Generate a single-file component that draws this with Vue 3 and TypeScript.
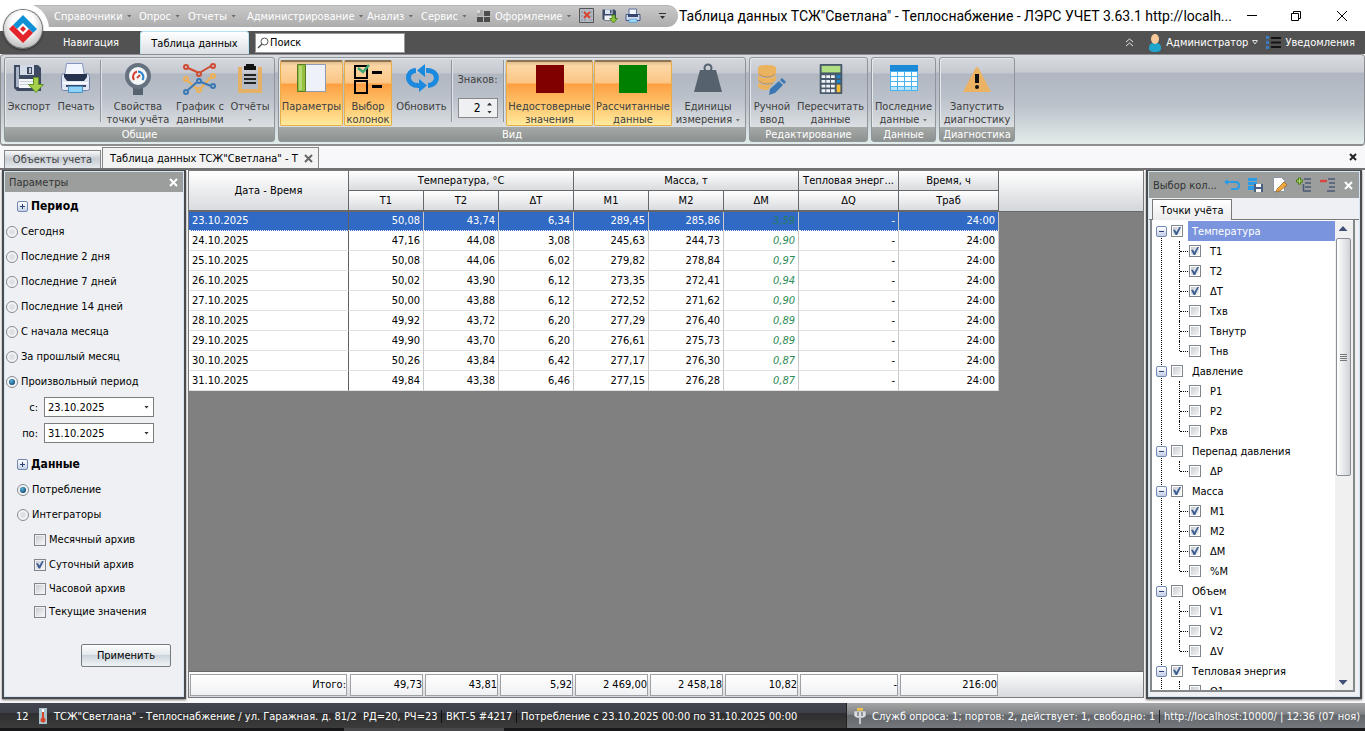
<script setup lang="ts">
import { ref, reactive } from 'vue'

interface TreeNode { label: string; checked: boolean; children: { label: string; checked: boolean }[] }

const menus: string[] = ['Справочники', 'Опрос', 'Отчеты', 'Администрирование', 'Анализ', 'Сервис']
const periods: string[] = ['Сегодня', 'Последние 2 дня', 'Последние 7 дней', 'Последние 14 дней', 'С начала месяца', 'За прошлый месяц', 'Произвольный период']
const period = ref('Произвольный период')
const dateFrom = ref('23.10.2025')
const dateTo = ref('31.10.2025')
const source = ref('Потребление')
const digits = ref('2')
const search = ref('Поиск')
const archives = reactive([
  { label: 'Месячный архив', checked: false },
  { label: 'Суточный архив', checked: true },
  { label: 'Часовой архив', checked: false },
  { label: 'Текущие значения', checked: false },
])

const rows: string[][] = [
  ['23.10.2025', '50,08', '43,74', '6,34', '289,45', '285,86', '3,59', '-', '24:00'],
  ['24.10.2025', '47,16', '44,08', '3,08', '245,63', '244,73', '0,90', '-', '24:00'],
  ['25.10.2025', '50,08', '44,06', '6,02', '279,82', '278,84', '0,97', '-', '24:00'],
  ['26.10.2025', '50,02', '43,90', '6,12', '273,35', '272,41', '0,94', '-', '24:00'],
  ['27.10.2025', '50,00', '43,88', '6,12', '272,52', '271,62', '0,90', '-', '24:00'],
  ['28.10.2025', '49,92', '43,72', '6,20', '277,29', '276,40', '0,89', '-', '24:00'],
  ['29.10.2025', '49,90', '43,70', '6,20', '276,61', '275,73', '0,89', '-', '24:00'],
  ['30.10.2025', '50,26', '43,84', '6,42', '277,17', '276,30', '0,87', '-', '24:00'],
  ['31.10.2025', '49,84', '43,38', '6,46', '277,15', '276,28', '0,87', '-', '24:00'],
]
const totals: string[] = ['Итого:', '49,73', '43,81', '5,92', '2 469,00', '2 458,18', '10,82', '-', '216:00']
const subHeads: string[] = ['T1', 'T2', 'ΔT', 'M1', 'M2', 'ΔM', 'ΔQ', 'Траб']

const node = (label: string, checked: boolean, on: string[], off: string[]): TreeNode => ({
  label,
  checked,
  children: [...on.map((l) => ({ label: l, checked: true })), ...off.map((l) => ({ label: l, checked: false }))],
})
const tree = reactive<TreeNode[]>([
  node('Температура', true, ['T1', 'T2', 'ΔT'], ['Tхв', 'Tвнутр', 'Tнв']),
  node('Давление', false, [], ['P1', 'P2', 'Pхв']),
  node('Перепад давления', false, [], ['ΔP']),
  node('Масса', true, ['M1', 'M2', 'ΔM'], ['%M']),
  node('Объем', false, [], ['V1', 'V2', 'ΔV']),
  node('Тепловая энергия', true, [], ['Q1']),
])
</script>

<template>
  <div class="app">
    <header class="titlebar">
      <div class="quick">
        <nav class="menus">
          <button v-for="m in menus" :key="m" type="button">{{ m }}<i class="tri"></i></button>
          <button type="button">
            <svg width="14" height="14" viewBox="0 0 14 14"><path fill="#a8a8a8" d="M0 1h6v6H0z" /><path fill="#4c4c4c" d="M7 2h6v5H7zM0 8h6v5H0zM7 8h6v5H7z" /><path fill="#d8d8d8" d="M0 1h3v3H0z" /></svg>
            Оформление<i class="tri"></i>
          </button>
        </nav>
        <button type="button" aria-label="Исключить" class="qi">
          <svg width="16" height="16" viewBox="0 0 16 16"><path fill="#b4bac2" stroke="#555" d="M.5.5h14v14H.5z" /><path stroke="#7d8fa8" stroke-dasharray="2 2" d="M3 3v10M6 3v10M12 3v10" /><path stroke="#d8452c" stroke-width="2" d="m5 4 6 6m0-6-6 6" /></svg>
        </button>
        <button type="button" aria-label="Экспорт" class="qi">
          <svg width="16" height="16" viewBox="0 0 32 32"><path fill="#3c4c68" d="M1 3h24l3 3v19H4l-3-3z" /><path fill="#d9e2ef" d="M6 3h15v9H6z" /><path fill="#3c4c68" d="M16 4h3v7h-3z" /><path fill="#eef2f8" d="M5 15h18v9H5z" /><path fill="#8ec63a" stroke="#3f7a12" stroke-width="1.5" d="M20 14h6v7h5l-8 9-8-9h5z" /></svg>
        </button>
        <button type="button" aria-label="Печать" class="qi">
          <svg width="16" height="16" viewBox="0 0 32 32"><path fill="#f2f5fb" stroke="#5b6f9d" stroke-width="2" d="M8 2h15v12H8z" /><path fill="#d5dcec" stroke="#42568a" stroke-width="2" d="M2 13h28v12H2z" /><path fill="#35456e" d="M6 12h20v6H6z" /><path fill="#9bd4f5" stroke="#3a88c0" d="M8 22h16v7H8z" /></svg>
        </button>
        <button type="button" aria-label="Настроить панель" class="more"><i class="bar"></i><i class="tri dark"></i></button>
      </div>
      <h1>Таблица данных ТСЖ"Светлана" - Теплоснабжение - ЛЭРС УЧЕТ 3.63.1 http://localh...</h1>
      <div class="wbtns">
        <button type="button" aria-label="Свернуть"><svg width="12" height="12"><path stroke="#000" d="M1 5.500h10" /></svg></button>
        <button type="button" aria-label="Восстановить"><svg width="12" height="12"><path fill="none" stroke="#000" d="M1.500 3.500h7v7h-7zM3.500 3V1.500h7v7H9" /></svg></button>
        <button type="button" aria-label="Закрыть"><svg width="12" height="12"><path stroke="#000" d="m1 1 10 10M11 1 1 11" /></svg></button>
      </div>
      <button type="button" class="orb" aria-label="Меню приложения">
        <svg width="30" height="30" viewBox="0 0 30 30"><path fill="#0f8fd6" d="M15 1l14 14-4 4-10-10-6 6-4-4z" /><path fill="#e3242b" d="M1 15l4-4 10 10 6-6 4 4-10 10z" /><path fill="#e3242b" d="M15 12l3 3-3 3-3-3z" /></svg>
      </button>
    </header>

    <div class="tabrow">
      <button type="button" class="rtab">Навигация</button>
      <button type="button" class="rtab on">Таблица данных</button>
      <label class="search">
        <svg width="12" height="12" viewBox="0 0 12 12"><circle cx="7.500" cy="4.500" r="3.500" fill="none" stroke="#555" /><path stroke="#555" stroke-width="1.500" d="M5 7 1 11" /></svg>
        <input v-model="search" type="text" aria-label="Поиск" />
      </label>
      <div class="user">
        <button type="button" aria-label="Свернуть ленту"><svg width="9" height="9" viewBox="0 0 9 9"><path fill="none" stroke="#e8e8e8" d="m1 4 3.500-3L8 4M1 8l3.500-3L8 8" /></svg></button>
        <button type="button" class="who">
          <svg width="14" height="18" viewBox="0 0 14 18"><path fill="#1fa5cc" d="M1 14c0-4 2-5 6-5s6 1 6 5c0 3-2 4-6 4s-6-1-6-4z" /><ellipse cx="7" cy="5" rx="4" ry="5" fill="#f8c99b" /></svg>
          Администратор<svg width="6" height="5" viewBox="0 0 6 5"><path fill="none" stroke="#ddd" d="M.5.500h5L3 4z" /></svg>
        </button>
        <button type="button" class="notes">
          <svg width="15" height="13" viewBox="0 0 15 13"><path stroke="#141414" stroke-width="2" d="M5 2h10M5 6.500h10M5 11h10" /><path fill="#3a7ac0" d="M0 0h3v3H0zM0 5h3v3H0zM0 10h3v3H0z" /></svg>
          Уведомления
        </button>
      </div>
    </div>

    <section class="ribbon">
      <div class="group">
        <div class="tools">
          <button type="button" class="w48">
            <svg width="32" height="32" viewBox="0 0 32 32"><path fill="#3d4a61" d="M1 2h24l3 3v23H4l-3-3z" /><path fill="#aab6c8" d="M3 4h3v20H3z" /><path fill="#d3dbe7" d="M7 2h14v10H7z" /><path fill="#3d4a61" d="M14 4h5v7h-5z" /><path fill="#c4ccd8" d="M16 5h2v5h-2z" /><path fill="#f4f6fa" d="M6 16h17v9H6z" /><path fill="#c7d0dd" d="M7 18h14v1H7zM7 21h14v1H7z" /><path fill="#a6d04b" stroke="#5d9221" d="M20.500 14.500h5v7h5l-7.500 8-7.500-8h5z" /></svg>
            <span>Экспорт</span>
          </button>
          <button type="button" class="w46">
            <svg width="32" height="32" viewBox="0 0 32 32"><path fill="#f3f6fc" stroke="#8497c4" d="M6.500.500h16l2 13h-20z" /><path fill="#dfe5f1" stroke="#7385ad" d="M1.500 13.500q0-3 3-3V14h22v-3.500q3 0 3 3v12q0 2-2 2h-24q-2 0-2-2z" /><path fill="#26324e" d="M4 11h23v3l-3 4H7l-3-4z" /><path fill="#f8faff" d="M3 19h25v2H3z" /><path fill="#394768" d="M6 22h20v2H6z" /><path fill="#8fd3f8" stroke="#4b93c4" d="M8.500 23.500h14v6h-14z" /></svg>
            <span>Печать</span>
          </button>
          <i class="sep"></i>
          <button type="button" class="w72">
            <svg width="32" height="32" viewBox="0 0 32 32"><path fill="#566270" d="M11 22h10v10H11z" /><circle cx="16" cy="13" r="11" fill="#f4f6f8" stroke="#66727f" stroke-width="4" /><path fill="none" stroke="#d83a30" stroke-width="2" d="M12 17a5.500 5.500 0 0 1 3-8.500" /><path fill="none" stroke="#2d86cc" stroke-width="2" d="M16 8.500a5.500 5.500 0 0 1 4.500 8.500" /><path stroke="#c5503a" stroke-width="2" d="m15 15 3-3" /></svg>
            <span>Свойства<br />точки учёта</span>
          </button>
          <button type="button" class="w52">
            <svg width="34" height="32" viewBox="0 0 34 32"><g fill="none" stroke-width="2"><g stroke="#efb052"><path d="m5 18 9 8m4-1 10-11" /><circle cx="3" cy="16" r="2" /><circle cx="16" cy="27" r="2" /><circle cx="30" cy="13" r="2" /></g><g stroke="#3a78b5"><path d="m5 27 9-8m4 0 10 4" /><circle cx="3" cy="29" r="2" /><circle cx="16" cy="18" r="2" /><circle cx="30" cy="23" r="2" /></g><g stroke="#cf4b32"><path d="m5 5 9 4m4 0 10-6" /><circle cx="3" cy="4" r="2" /><circle cx="16" cy="11" r="2" /><circle cx="30" cy="3" r="2" /></g></g></svg>
            <span>График с<br />данными</span>
          </button>
          <button type="button" class="w48">
            <svg width="26" height="32" viewBox="0 0 26 32"><path fill="#e5b067" d="M1 4h4v22h16V4h4v26H1z" /><path fill="#111" d="M7 3h2V1h8v2h2v4H7z" /><path stroke="#222" stroke-width="2" d="M7 12h12M7 16h12M7 20h12" /></svg>
            <span>Отчёты<br /><i class="tri grey"></i></span>
          </button>
        </div>
        <h2>Общие</h2>
      </div>

      <div class="group">
        <div class="tools view">
          <button type="button" class="w63 on">
            <svg width="32" height="32" viewBox="0 0 32 32"><path fill="#eef1f8" stroke="#8d99b5" d="M2.500 1.500h27v27h-27z" /><path fill="#94bf3f" stroke="#5b7a28" d="M1.500 1.500h8v27h-8z" /><path fill="#b6d973" d="M3 3h3v24H3z" /></svg>
            <span>Параметры</span>
          </button>
          <button type="button" class="w48 on">
            <svg width="30" height="32" viewBox="0 0 30 32"><path fill="none" stroke="#000" stroke-width="2" d="M2 3h12v12H2zM2 18h12v12H2z" /><path stroke="#000" stroke-width="3" d="M19 9.500h10M19 23.500h10" /><path fill="none" stroke="#3fa877" stroke-width="2.500" d="m5 5 5 4 6-7" /></svg>
            <span>Выбор<br />колонок</span>
          </button>
          <button type="button" class="w57">
            <svg width="34" height="32" viewBox="0 0 34 32"><g fill="none" stroke="#1b8ade" stroke-width="5"><path d="M14 22.500C1 23 0 8 11 7.500" /><path d="M21 7.500c13-1 14 14 2 15" /></g><path fill="#1b8ade" d="m20 1v13l-8-6.500zM14 16v13l8-6.500z" /></svg>
            <span>Обновить</span>
          </button>
          <i class="sep"></i>
          <label class="digits">Знаков:
            <span class="spin"><input v-model="digits" type="text" aria-label="Знаков" /><span class="ud"><i class="tri up"></i><i class="tri dark"></i></span></span>
          </label>
          <i class="sep"></i>
          <button type="button" class="w87 on first"><i class="swatch red"></i><span>Недостоверные<br />значения</span></button>
          <button type="button" class="w78 on"><i class="swatch green"></i><span>Рассчитанные<br />данные</span></button>
          <button type="button" class="w70">
            <svg width="30" height="32" viewBox="0 0 30 32"><circle cx="15" cy="5" r="3.500" fill="none" stroke="#54616e" stroke-width="2" /><path fill="#56636f" d="M7 7h16l6 22H1z" /></svg>
            <span>Единицы<br />измерения <i class="tri grey"></i></span>
          </button>
        </div>
        <h2>Вид</h2>
      </div>

      <div class="group">
        <div class="tools">
          <button type="button" class="w44">
            <svg width="32" height="32" viewBox="0 0 32 32"><path fill="#ecb35f" d="M2 5q0-3 9-3t9 3v5q0 3-9 3T2 10zM2 12q2 3 9 3t9-3v4q0 4-9 4T2 16zM2 19q2 3 9 3t5-1l-4 6Q2 27 2 23z" /><path stroke="#c98b3a" fill="none" d="M3 11q3 3 8 3t8-3M3 18q3 3 8 3t6-1" /><path fill="#3b78b3" d="m14 26 9-8 4 4-8 8-6 2zM24 17l2-2 4 4-2 2z" /></svg>
            <span>Ручной<br />ввод</span>
          </button>
          <button type="button" class="w73">
            <svg width="26" height="34" viewBox="0 0 26 34"><rect x="1" y="1" width="24" height="32" rx="1" fill="#48596b" /><path fill="#b1df84" d="M3 3h20v7H3z" /><path fill="#f0f3f6" d="M3 13h4v3H3zM8 13h4v3H8zM13 13h4v3h-4zM3 18h4v3H3zM8 18h4v3H8zM13 18h4v3h-4zM3 23h4v3H3zM8 23h4v3H8zM13 23h4v3h-4zM3 28h4v3H3zM8 28h4v3H8zM13 28h4v3h-4z" /><path fill="#1b86d0" d="M19 13h4v3h-4zM19 18h4v3h-4z" /><path fill="#f5bd35" d="M19 23h4v8h-4z" /></svg>
            <span>Пересчитать<br />данные</span>
          </button>
        </div>
        <h2>Редактирование</h2>
      </div>
      <div class="group">
        <div class="tools">
          <button type="button" class="w63">
            <svg width="30" height="32" viewBox="0 0 30 32"><path fill="#4cb3ee" d="M1 2h28v26H1z" /><path fill="#1a8ad6" d="M1 2h28v6H1z" /><path fill="#fff" d="M2 9h6v4H2zM9 9h6v4H9zM16 9h6v4h-6zM23 9h5v4h-5zM2 14h6v4H2zM9 14h6v4H9zM16 14h6v4h-6zM23 14h5v4h-5zM2 19h6v4H2zM9 19h6v4H9zM16 19h6v4h-6zM23 19h5v4h-5z" /><path fill="#b8e4fb" d="M2 24h6v3H2zM9 24h6v3H9zM16 24h6v3h-6zM23 24h5v3h-5z" /></svg>
            <span>Последние<br />данные <i class="tri grey"></i></span>
          </button>
        </div>
        <h2>Данные</h2>
      </div>
      <div class="group">
        <div class="tools">
          <button type="button" class="w74">
            <svg width="30" height="32" viewBox="0 0 30 32"><path fill="#ecb263" d="M15 4q1 0 2 2l12 23H1L13 6q1-2 2-2z" /><path fill="#111" d="M13 11h4v9h-4z" /><circle cx="15" cy="24" r="2" fill="#111" /></svg>
            <span>Запустить<br />диагностику</span>
          </button>
        </div>
        <h2>Диагностика</h2>
      </div>
    </section>

    <div class="doctabs">
      <button type="button" class="dtab">Объекты учета</button>
      <div class="dtab on"><span>Таблица данных ТСЖ"Светлана" - Т</span>
        <button type="button" aria-label="Закрыть вкладку"><svg width="9" height="9"><path stroke="#666" stroke-width="2" d="m1 1 7 7M8 1 1 8" /></svg></button>
      </div>
      <button type="button" class="closeall" aria-label="Закрыть"><svg width="8" height="8"><path stroke="#222" stroke-width="2" d="m1 1 6 6M7 1 1 7" /></svg></button>
    </div>

    <main>
      <aside class="pane params">
        <div class="phead"><span>Параметры</span>
          <button type="button" aria-label="Закрыть параметры"><svg width="9" height="9"><path stroke="#fff" stroke-width="2" d="m1 1 7 7M8 1 1 8" /></svg></button>
        </div>
        <form class="pbody" @submit.prevent>
          <h3><button type="button" class="exp" aria-label="Развернуть период"><i></i><i class="v"></i></button>Период</h3>
          <label v-for="p in periods" :key="p" class="opt"><input v-model="period" type="radio" name="period" :value="p" />{{ p }}</label>
          <div class="date"><label for="from">с:</label><span class="combo"><input id="from" v-model="dateFrom" type="text" /><button type="button" aria-label="Выбрать дату начала"><i class="tri dark"></i></button></span></div>
          <div class="date last"><label for="to">по:</label><span class="combo"><input id="to" v-model="dateTo" type="text" /><button type="button" aria-label="Выбрать дату окончания"><i class="tri dark"></i></button></span></div>
          <h3><button type="button" class="exp" aria-label="Развернуть данные"><i></i><i class="v"></i></button>Данные</h3>
          <label class="opt src"><input v-model="source" type="radio" name="source" value="Потребление" />Потребление</label>
          <label class="opt src"><input v-model="source" type="radio" name="source" value="Интеграторы" />Интеграторы</label>
          <label v-for="a in archives" :key="a.label" class="opt arch"><input v-model="a.checked" type="checkbox" />{{ a.label }}</label>
          <button type="submit" class="apply">Применить</button>
        </form>
      </aside>

      <section class="grid">
        <div class="ghead">
          <table>
            <colgroup><col class="c0" /><col v-for="n in 6" :key="n" class="c1" /><col class="c2" /><col class="c2" /></colgroup>
            <thead>
              <tr><th rowspan="2">Дата - Время</th><th colspan="3">Температура, °С</th><th colspan="3">Масса, т</th><th>Тепловая энерг...</th><th>Время, ч</th></tr>
              <tr><th v-for="h in subHeads" :key="h">{{ h }}</th></tr>
            </thead>
            <tbody>
              <tr v-for="(r, i) in rows" :key="r[0]" :class="{ sel: i === 0 }"><td v-for="(c, j) in r" :key="j">{{ c }}</td></tr>
            </tbody>
          </table>
        </div>
        <div class="gfoot">
          <table>
            <colgroup><col class="c0" /><col v-for="n in 6" :key="n" class="c1" /><col class="c2" /><col class="c2" /></colgroup>
            <tbody><tr><td v-for="(t, i) in totals" :key="i"><div>{{ t }}</div></td></tr></tbody>
          </table>
        </div>
      </section>

      <aside class="pane cols">
        <div class="phead">
          <span>Выбор кол...</span>
          <div class="acts">
            <button type="button" aria-label="Отменить"><svg width="16" height="16" viewBox="0 0 16 16"><path fill="none" stroke="#2b9be6" stroke-width="2" d="M2 5h10q3 0 3 3.500T12 12H7" /><path fill="#2b9be6" d="M0 5l4-3v6z" /></svg></button>
            <button type="button" aria-label="Сохранить"><svg width="16" height="16" viewBox="0 0 16 16"><path fill="#2a9de8" d="M0 1h9v3H0zM0 5h9v3H0zM0 9h6v4H0z" /><path fill="#4a5e80" d="M6 7h9v8H6z" /><path fill="#fff" d="M8 7h5v3H8zM8 12h5v3H8z" /></svg></button>
            <button type="button" aria-label="Изменить"><svg width="16" height="16" viewBox="0 0 16 16"><path fill="#fff" stroke="#8d97a8" d="M1.500.500h8l3 3v11h-11z" /><path fill="#f0a63c" stroke="#9a6420" stroke-width=".7" d="m5 12 7-7 3 3-7 6-4 1z" /></svg></button>
            <button type="button" aria-label="Развернуть все"><svg width="16" height="16" viewBox="0 0 16 16"><path stroke="#4b5a76" stroke-width="1.500" d="M8 2h7M9 6h6M9 10h6M7 14h8M7.500 7v7" /><path stroke="#4f7d1d" stroke-width="3" d="M0 4h7M3.500.500v7" /><path stroke="#b4e070" d="M1 4h5M3.500 1.500v5" /></svg></button>
            <button type="button" aria-label="Свернуть все"><svg width="16" height="16" viewBox="0 0 16 16"><path stroke="#4b5a76" stroke-width="1.500" d="M8 2h7M9 6h6M9 10h6M7 14h8" /><path stroke="#d8453a" stroke-width="2.500" d="M0 4h7" /></svg></button>
            <button type="button" aria-label="Закрыть панель"><svg width="9" height="9"><path stroke="#fff" stroke-width="2" d="m1 1 7 7M8 1 1 8" /></svg></button>
          </div>
        </div>
        <div class="ctabs"><button type="button">Точки учёта</button></div>
        <div class="treebox">
          <ul class="tree">
            <li v-for="(g, i) in tree" :key="g.label" class="branch">
              <div class="row parent" :class="{ cur: i === 0 }">
                <button type="button" class="exp" aria-label="Свернуть ветвь"><i></i></button>
                <label><input v-model="g.checked" type="checkbox" /><span>{{ g.label }}</span></label>
              </div>
              <ul>
                <li v-for="c in g.children" :key="c.label" class="row leaf"><label><input v-model="c.checked" type="checkbox" /><span>{{ c.label }}</span></label></li>
              </ul>
            </li>
          </ul>
          <div class="scroll">
            <i class="tri up big"></i>
            <div class="thumb"><i></i><i></i><i></i><i></i></div>
            <i class="tri big"></i>
          </div>
        </div>
      </aside>
    </main>

    <footer class="status">
      <div class="sleft">
        <span class="num">12</span>
        <svg width="8" height="16" viewBox="0 0 8 16"><path fill="#a9c4cf" d="M0 0h8v16H0z" /><path fill="#fff" d="M3 1h2v9H3z" /><path fill="#d8452c" d="M3 4h2v6H3z" /><circle cx="4" cy="12" r="2.500" fill="#d8452c" /></svg>
        <span class="s1">ТСЖ"Светлана" - Теплоснабжение / ул. Гаражная. д. 81/2&nbsp; РД=20, РЧ=23</span>
        <span class="s2">ВКТ-5 #4217</span>
        <span class="s3">Потребление с 23.10.2025 00:00 по 31.10.2025 00:00</span>
      </div>
      <div class="sright">
        <svg width="14" height="16" viewBox="0 0 14 16"><path fill="#f2c14a" d="M4 0h6v3H4z" /><path fill="#d9dde2" stroke="#777" stroke-width=".5" d="M1 3h12v5l-3 2H4L1 8z" /><path fill="#8e959c" d="M4 4h2v4H4zM8 4h2v4H8z" /><path fill="#c5cad0" d="M6 10h2v6H6z" /></svg>
        <span class="s4">Служб опроса: 1; портов: 2, действует: 1, свободно: 1</span>
        <span class="s5">http://localhost:10000/ | 12:36 (07 ноя)</span>
      </div>
    </footer>
    <div class="edge"><i></i></div>
  </div>
</template>

<style>
html, body { margin: 0; background: #f8f8fa; }
</style>

<style scoped>
* { box-sizing: border-box; }
.app { height: 100vh; display: flex; flex-direction: column; overflow: hidden; font: 11px/13px "DejaVu Sans Condensed", "Noto Sans", sans-serif; color: #000; background: #f8f8fa; }
button { font: inherit; color: inherit; background: none; border: 0; padding: 0; margin: 0; }
input { font: inherit; color: inherit; margin: 0; }
svg { display: block; flex: none; }
h1, h2, h3, ul { margin: 0; padding: 0; list-style: none; font-size: 11px; font-weight: normal; }
.tri { display: inline-block; flex: none; width: 5px; height: 3px; background: #fff; clip-path: polygon(0 0, 100% 0, 50% 100%); }
.tri.dark { background: #333; }
.tri.grey { background: #777; vertical-align: middle; }
.tri.up { background: #333; clip-path: polygon(50% 0, 100% 100%, 0 100%); }
.tri.big { width: 9px; height: 5px; background: #3f4f75; }

.titlebar { position: relative; flex: none; height: 31px; display: flex; align-items: center; background: #fff; padding-left: 34px; }
.titlebar::before { content: ""; position: absolute; left: -3px; top: 3px; width: 52px; height: 28px; border-radius: 26px 26px 0 0; background: #fff; }
.quick { height: 22px; display: flex; align-items: center; flex: none; width: 644px; padding-left: 20px; background: linear-gradient(#c8c8c8, #adadad); border-radius: 0 11px 11px 0; border-top: 1px solid #b5b5b5; }
.menus { display: grid; grid-template-columns: 85px 49px 59px 120px 54px 56px 102px; color: #fff; }
.menus button { display: flex; align-items: center; gap: 4px; white-space: nowrap; }
.menus .tri { background: #6c6c6c; }
.qi { width: 23px; }
.more { display: grid; justify-items: center; gap: 2px; margin-left: 11px; }
.more .bar { width: 7px; height: 1px; background: #333; }
.titlebar h1 { flex: 1; min-width: 0; padding-left: 1px; font: 14px/20px Roboto, "Noto Sans", sans-serif; white-space: nowrap; }
.wbtns { display: flex; flex: none; }
.wbtns button { width: 46px; height: 28px; display: grid; place-items: center; }
.wbtns button:first-child { width: 42px; }
.orb { position: absolute; left: 4px; top: 10px; width: 38px; height: 38px; border-radius: 50%; z-index: 2; display: grid; place-items: center; background: radial-gradient(circle at 50% 35%, #fff 35%, #c5c5c5 75%, #8c8c8c); box-shadow: 0 0 0 1px #777, 0 1px 3px #000; }

.tabrow { flex: none; height: 23px; display: flex; align-items: center; background: #525252; color: #fff; padding-left: 42px; }
.rtab { width: 98px; height: 23px; }
.rtab.on { width: 109px; color: #000; background: linear-gradient(#fff, #dadfe4); border-radius: 3px 3px 0 0; border: 1px solid #b9e4f2; border-bottom: 0; }
.search { margin-left: 6px; width: 150px; height: 20px; display: flex; align-items: center; gap: 1px; padding-left: 1px; background: #fff; border: 1px solid #999; }
.search input { flex: 1; min-width: 0; border: 0; padding: 0; color: #000; background: none; outline: 0; }
.user { margin-left: auto; display: flex; align-items: center; padding-right: 10px; }
.who { display: flex; align-items: center; gap: 4px; margin-left: 14px; }
.notes { display: flex; align-items: center; gap: 4px; margin-left: 8px; }

.ribbon { flex: none; height: 92px; display: flex; gap: 3px; padding: 2px 3px; border: 1px solid #8b8d90; border-bottom: 2px solid #8e8e8e; border-radius: 4px; background: linear-gradient(#d9dce0 0, #c8ccd2 17px, #b0b6c1 18px, #bcc2ca 50px, #e2eceb 100%); }
.group { display: flex; flex-direction: column; border: 1px solid #8f959b; border-radius: 3px; box-shadow: inset 1px 1px 0 #e5e8ea; background: linear-gradient(#d5d8dd 0, #c6cad0 15px, #b1b7c1 16px, #bbc1ca 40px, #dde1e4 71px); }
.tools { height: 70px; display: flex; padding-top: 2px; color: #404040; }
.view { padding-left: 1px; padding-right: 2px; }
.tools button { height: 66px; display: flex; flex-direction: column; align-items: center; text-align: center; white-space: nowrap; padding-top: 3px; }
.tools button > svg { height: 32px; margin-bottom: 5px; }
.tools button.on { border: 1px solid #e9ad45; border-top: 2px solid #8c7657; border-radius: 2px; padding-top: 1px; margin-right: 1px; background: linear-gradient(#e3bd8d 0, #fcd7a5 4px, #fcc583 21px, #fd9f43 22px, #fec36a 42px, #ffea9e 100%); }
.tools button.first { margin-left: 1px; }
.w44 { width: 44px; } .w46 { width: 46px; } .w48 { width: 48px; } .w52 { width: 52px; } .w57 { width: 57px; }
.w63 { width: 63px; } .w70 { width: 70px; } .w72 { width: 72px; } .w73 { width: 73px; } .w74 { width: 74px; }
.w78 { width: 78px; } .w87 { width: 87px; }
.sep { flex: none; width: 1px; height: 62px; margin: 0 1px; background: #8f969f; box-shadow: 1px 0 0 #dfe3e7; }
.swatch { flex: none; width: 28px; height: 28px; margin-top: 2px; margin-bottom: 7px; }
.swatch.red { background: #800000; }
.swatch.green { background: #008000; }
.digits { width: 49px; display: flex; flex-direction: column; align-items: center; padding-top: 13px; gap: 12px; }
.spin { width: 40px; height: 20px; display: flex; align-items: center; border: 1px solid #888; background: #eef0f2; }
.spin input { width: 24px; border: 0; padding: 0 2px 0 0; background: none; text-align: right; font-size: 12px; color: #000; outline: 0; }
.ud { flex: 1; display: grid; justify-items: center; gap: 5px; }
.group h2 { flex: none; height: 14px; line-height: 16px; text-align: center; color: #fff; background: linear-gradient(#a5a9a8, #8d918f); }

.doctabs { flex: none; height: 24px; display: flex; align-items: flex-end; padding-left: 4px; border-bottom: 2px solid #727275; }
.dtab { height: 18px; width: 97px; color: #444; border: 1px solid #858585; border-bottom: 0; background: linear-gradient(#fafafa, #c7cdd4 45%, #e6e9ec); }
.dtab.on { width: 217px; height: 21px; margin-left: 1px; display: flex; align-items: center; justify-content: space-between; padding: 0 5px 0 7px; color: #000; background: #f3f3f3; white-space: nowrap; }
.closeall { margin-left: auto; margin-right: 8px; align-self: center; }

main { flex: 1; min-height: 0; display: flex; padding: 0 3px 4px 2px; }
.pane { display: flex; flex-direction: column; border: 2px solid #4a4b4c; border-top-width: 1px; box-shadow: inset 0 0 0 1px #d5e5f3, 0 1px 2px #777; background: #eef0f3; padding: 1px; }
.params { width: 184px; flex: none; }
.phead { flex: none; height: 20px; display: flex; align-items: center; justify-content: space-between; padding: 0 5px 0 4px; color: #333; background: #9b9e9c; }
.pbody { padding-top: 2px; display: flex; flex-direction: column; }
.pbody h3 { height: 25px; display: flex; align-items: center; gap: 3px; padding-left: 12px; font-weight: bold; font-size: 12px; }
.exp { flex: none; position: relative; width: 11px; height: 11px; display: grid; place-items: center; border: 1px solid #7289b3; border-radius: 2px; background: linear-gradient(#fff, #c4d0e6); z-index: 1; }
.exp i { grid-area: 1 / 1; width: 5px; height: 1px; background: #2c4270; }
.exp .v { width: 1px; height: 5px; }
.opt { height: 25px; display: flex; align-items: center; gap: 3px; padding-left: 1px; }
.src { padding-left: 12px; }
.arch { padding-left: 29px; }
.arch:nth-last-of-type(-n + 2) { height: 23px; }
input[type="radio"] { appearance: none; width: 12px; height: 12px; border: 1px solid #858b93; border-radius: 50%; display: grid; place-items: center; background: radial-gradient(#dde0e4 30%, #f6f6f6 60%); }
input[type="radio"]:checked::before { content: ""; width: 6px; height: 6px; border-radius: 50%; background: radial-gradient(circle at 40% 35%, #55b5d8, #174a78 75%); }
input[type="checkbox"] { appearance: none; flex: none; width: 12px; height: 12px; border: 1px solid #80868d; display: grid; place-items: center; background: linear-gradient(135deg, #c9ccd1, #f6f6f6) content-box #fff; padding: 1px; }
input[type="checkbox"]:checked::before { content: ""; width: 8px; height: 8px; background: #3b5e94; clip-path: polygon(0 35%, 25% 35%, 42% 62%, 80% 0, 100% 0, 52% 100%, 32% 100%); }
.date { height: 26px; display: flex; align-items: center; }
.date label { width: 33px; text-align: right; margin-right: 6px; }
.date.last { margin-bottom: 6px; }
.combo { width: 110px; height: 20px; display: flex; border: 1px solid #7d7d7d; background: #fff; }
.combo input { flex: 1; min-width: 0; border: 0; padding: 0 3px; background: none; outline: 0; }
.combo button { width: 13px; display: grid; place-items: center; }
.apply { width: 90px; height: 23px; margin: 21px 0 0 76px; border: 1px solid #747b82; border-radius: 2px; background: linear-gradient(#fdfdfd, #e5e9ed 45%, #ccd5dc 50%, #f0f3f5); }

.grid { flex: 1; min-width: 0; margin: 0 0 1px 2px; display: flex; flex-direction: column; border: 1px solid #77797b; background: #808080; }
.ghead { flex: 1; min-height: 0; overflow: hidden; background: linear-gradient(#fff, #d3d6da) top / 100% 40px no-repeat; position: relative; }
.ghead::before { content: ""; position: absolute; left: 0; right: 0; top: 0; height: 40px; border-bottom: 1px solid #66686a; }
table { width: 810px; table-layout: fixed; border-collapse: separate; border-spacing: 0; }
.c0 { width: 160px; } .c1 { width: 75px; } .c2 { width: 100px; }
th { height: 20px; padding: 0; font-weight: normal; border-right: 1px solid #66686a; border-bottom: 1px solid #66686a; background: linear-gradient(#fff, #d9dbdf); white-space: nowrap; overflow: hidden; }
.ghead td { height: 20px; padding: 0 3px 0 0; text-align: right; background: #fff; border-right: 1px solid #c9c9c9; border-bottom: 1px solid #e2e2e2; }
.ghead td:first-child { text-align: left; padding-left: 3px; border-right-color: #606060; }
.ghead td:nth-child(7) { color: #2e8b57; font-style: italic; }
.ghead .sel td { color: #fff; background: repeating-linear-gradient(90deg, #fff 0 1px, #316ac5 1px 2px) top / 100% 1px no-repeat #316ac5; border-bottom: 1px dotted #fff; }
.ghead .sel td:nth-child(7) { color: #267a62; }
.gfoot { flex: none; height: 26px; background: linear-gradient(#fdfdfd, #d6d9de); border-top: 1px solid #66686a; }
.gfoot td { height: 25px; padding: 0 1px; text-align: right; }
.gfoot td div { height: 22px; line-height: 20px; border: 1px solid #9fa1a4; background: linear-gradient(#fff, #f0f1f3); }
.gfoot td:first-child { padding-right: 2px; }

.cols { flex: none; width: 216px; margin-left: 2px; }
.cols .phead { height: 26px; padding-right: 6px; }
.acts { display: flex; align-items: center; gap: 8px; }
.ctabs { height: 22px; padding: 1px 3px 0; display: flex; flex: none; border-bottom: 1px solid #77797b; }
.ctabs button { width: 80px; height: 21px; border: 1px solid #77797b; border-bottom: 0; background: linear-gradient(#fff, #ececee); }
.treebox { flex: 1; min-height: 0; display: flex; margin: 0 4px 4px 1px; border: 2px solid #85888b; border-top: 0; background: #fff; padding-top: 1px; }
.tree { flex: 1; min-width: 0; overflow: hidden; }
.branch { position: relative; }
.branch::before { content: ""; position: absolute; left: 9px; top: 10px; height: 100%; border-left: 1px dotted #000; }
.row { height: 20px; display: flex; align-items: center; }
.row label { flex: 1; height: 100%; display: flex; align-items: center; gap: 5px; }
.row span { flex: 1; height: 100%; line-height: 21px; padding-left: 4px; }
.parent { padding-left: 4px; gap: 4px; }
.cur span { color: #fff; background: #7a95de; }
.leaf { position: relative; padding-left: 37px; }
.leaf::before { content: ""; position: absolute; left: 27px; top: 0; height: 20px; border-left: 1px dotted #000; }
.leaf:last-child::before { height: 10px; }
.leaf::after { content: ""; position: absolute; left: 28px; top: 10px; width: 8px; border-top: 1px dotted #000; }
.scroll { width: 18px; flex: none; display: flex; flex-direction: column; align-items: center; padding: 5px 2px 5px 0; background: #f0f0f1; }
.thumb { width: 15px; height: 238px; margin: 7px 0 auto; display: flex; flex-direction: column; align-items: center; justify-content: center; gap: 1px; border: 1px solid #8a8d93; border-radius: 2px; background: linear-gradient(90deg, #fff, #cfd2d8); }
.thumb i { width: 7px; height: 1px; background: #777; }

.status { flex: none; height: 25px; display: flex; color: #fff; white-space: nowrap; }
.sleft { flex: 1; min-width: 0; display: flex; align-items: center; padding: 1px 0 0 16px; background: linear-gradient(#42454e, #3d4048 40%, #2f2f31 42%, #3b3b3b); }
.num { width: 23px; }
.s1 { margin-left: 7px; width: 387px; }
.s2 { width: 75px; padding-left: 4px; border-left: 1px solid #111; }
.s3 { padding-left: 4px; border-left: 1px solid #111; }
.sright { flex: none; width: 519px; display: flex; align-items: center; padding: 1px 0 0 6px; border-left: 1px solid #222; background: linear-gradient(#a5a5a5, #808386 45%, #63676c 48%, #74787c); }
.s4 { margin-left: 5px; flex: 1; }
.s5 { flex: none; width: 206px; padding-left: 4px; border-left: 1px solid #222; }
.edge { flex: none; height: 3px; background: #17171a; padding-left: 344px; }
.edge i { display: block; width: 160px; height: 3px; background: #48484a; }
</style>
